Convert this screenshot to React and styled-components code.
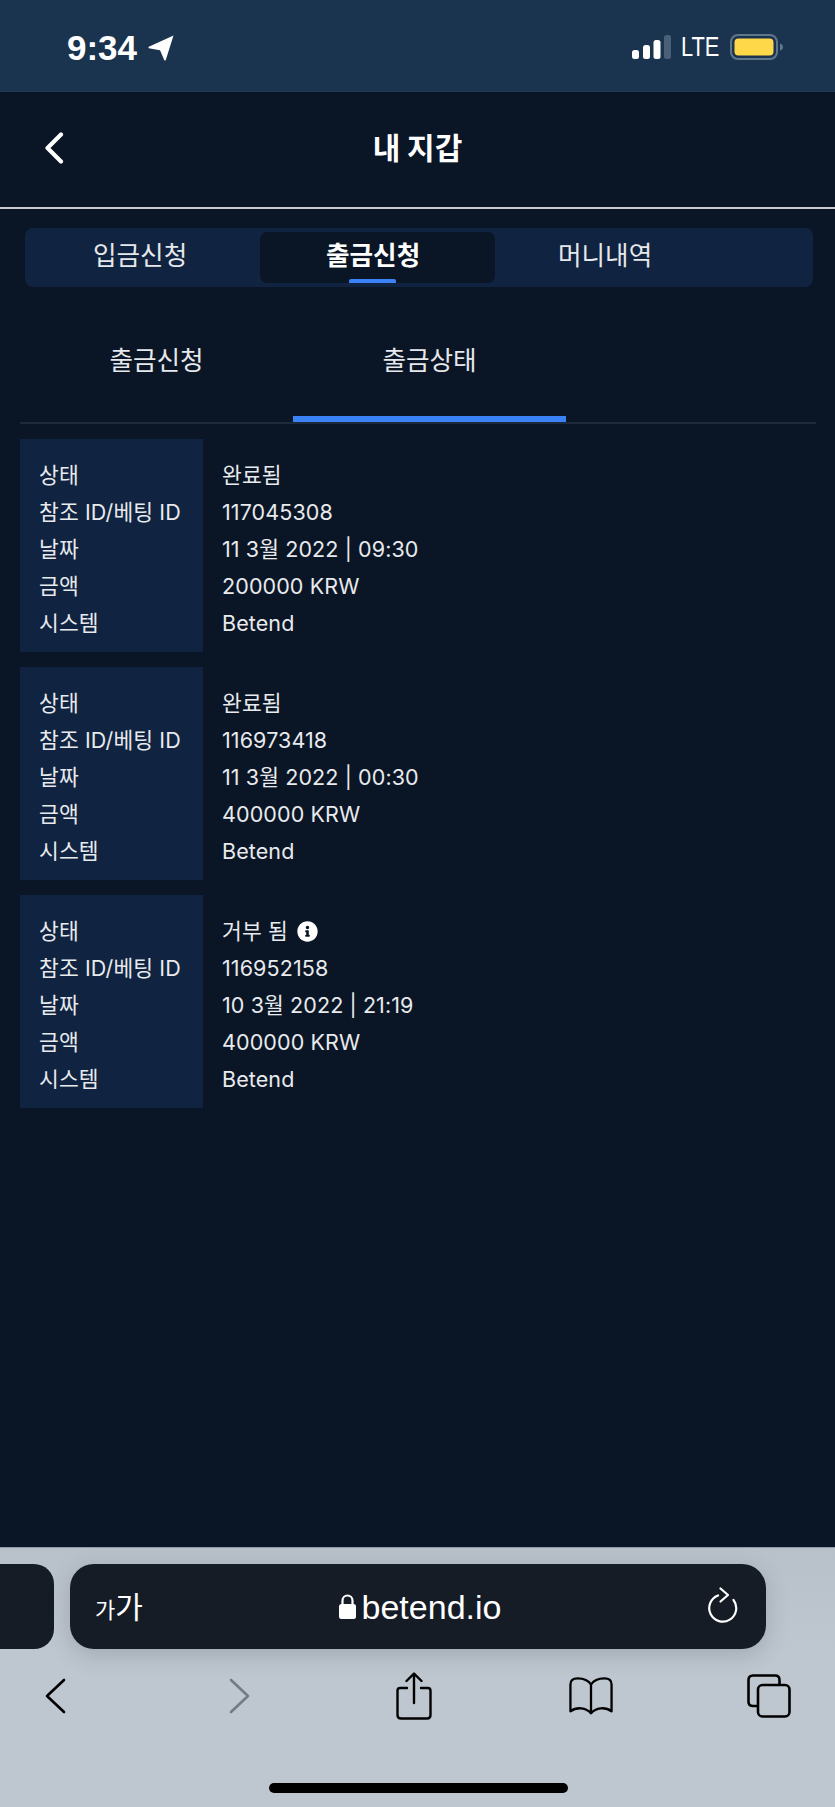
import React from "react";
import styled, { createGlobalStyle } from "styled-components";
import { FaInfoCircle } from "react-icons/fa";

const GlobalStyle = createGlobalStyle`
  html, body {
    margin: 0;
    padding: 0;
    background: #0a1626;
  }
  * {
    box-sizing: border-box;
  }
`;

const KR = `"Noto Sans CJK KR", "Noto Sans", sans-serif`;

const Screen = styled.div`
  width: 835px;
  height: 1807px;
  display: flex;
  flex-direction: column;
  overflow: hidden;
  background: #0a1626;
  color: #f1f3f5;
  font-family: ${KR};
`;

const StatusBar = styled.div`
  height: 92px;
  flex: none;
  display: flex;
  align-items: flex-start;
  justify-content: space-between;
  padding: 34px 51px 0 67px;
  background: #1a334f;
  border-bottom: 1px solid #24384e;
`;

const TimeGroup = styled.div`
  display: flex;
  align-items: center;
  gap: 11px;
`;

const Time = styled.span`
  font-family: "Liberation Sans", sans-serif;
  font-size: 35px;
  font-weight: 700;
  line-height: 27px;
  color: #fff;
`;

const StatusIcons = styled.div`
  display: flex;
  align-items: center;
  height: 26px;
`;

const Lte = styled.span`
  width: 38px;
  margin: 0 11px 0 10px;
  font-family: "Liberation Sans", sans-serif;
  font-size: 28px;
  line-height: 26px;
  color: #fff;
  white-space: nowrap;
  transform: scaleX(0.78);
  transform-origin: left center;
`;

const NavBar = styled.header`
  height: 117px;
  flex: none;
  display: grid;
  grid-template-columns: 1fr auto 1fr;
  align-items: center;
  padding: 0 44px 4px;
  border-bottom: 2px solid #c9cbce;
`;

const NavTitle = styled.h1`
  margin: 0 0 3px;
  font-size: 30px;
  font-weight: 700;
  line-height: 40px;
  color: #fff;
`;

const MainTabs = styled.nav`
  margin: 19px 22px 0 25px;
  height: 59px;
  flex: none;
  display: grid;
  grid-template-columns: 235px 235px 220px;
  padding: 4px 0;
  background: #102340;
  border-radius: 8px;
`;

const MainTab = styled.div`
  position: relative;
  padding: 3px 0 0 ${(p) => p.$inset}px;
  font-size: 25.6px;
  line-height: 38px;
  font-weight: ${(p) => (p.$active ? 700 : 400)};
  color: ${(p) => (p.$active ? "#fff" : "#e6e8eb")};
  background: ${(p) => (p.$active ? "#0a1626" : "transparent")};
  border-radius: 7px;
`;

const TabMarker = styled.span`
  position: absolute;
  left: 89px;
  bottom: 0;
  width: 47px;
  height: 4px;
  border-radius: 2px 2px 0 0;
  background: #3b82f6;
`;

const SubTabs = styled.div`
  margin: 36px 19px 0 20px;
  flex: none;
  display: flex;
  border-bottom: 2px solid #1d2a3c;
`;

const SubTab = styled.div`
  width: 273px;
  height: 99px;
  padding-top: 17px;
  text-align: center;
  font-size: 25.6px;
  line-height: 38px;
  color: #e6e8eb;
  border-bottom: 6px solid ${(p) => (p.$active ? "#3b82f6" : "transparent")};
`;

const CardList = styled.div`
  margin: 15px 20px 0;
  display: flex;
  flex-direction: column;
  gap: 15px;
`;

const Card = styled.section`
  display: flex;
  height: 213px;
`;

const LabelColumn = styled.div`
  width: 183px;
  padding: 18px 0 0 19px;
  background: #102340;
`;

const ValueColumn = styled.div`
  padding: 18px 0 0 19px;
`;

const Line = styled.div`
  display: flex;
  align-items: center;
  gap: 9px;
  height: 37px;
  font-family: Inter, "Noto Sans CJK KR", sans-serif;
  font-size: 21.5px;
  letter-spacing: 0.1px;
  line-height: 37px;
  color: #e8eaed;
  white-space: nowrap;
`;

const InfoIcon = styled(FaInfoCircle)`
  width: 21px;
  height: 21px;
  color: #fff;
`;

const Toolbar = styled.footer`
  margin-top: auto;
  height: 260px;
  flex: none;
  padding-top: 16px;
  background: linear-gradient(#b8c0c9, #bec6cf 40%);
  border-top: 1px solid #8f99a5;
`;

const AddressRow = styled.div`
  display: flex;
  gap: 16px;
`;

const PeekTab = styled.div`
  width: 54px;
  height: 85px;
  background: #151c26;
  border-radius: 0 20px 20px 0;
`;

const AddressBar = styled.div`
  width: 696px;
  height: 85px;
  display: grid;
  grid-template-columns: 1fr auto 1fr;
  align-items: center;
  padding: 0 27px 0 25px;
  background: #151c26;
  border-radius: 24px;
  box-shadow: 0 6px 22px rgba(60, 70, 85, 0.22);
  color: #fff;
`;

const TextSize = styled.div`
  display: flex;
  align-items: baseline;
  font-size: 30px;
  line-height: 40px;
`;

const SmallGa = styled.span`
  font-size: 22px;
`;

const Domain = styled.div`
  display: flex;
  align-items: center;
  gap: 6px;
  margin-left: 6px;
  font-family: "Liberation Sans", sans-serif;
  font-size: 34px;
  line-height: 40px;
`;

const ReloadSlot = styled.div`
  display: flex;
  justify-content: flex-end;
  margin-bottom: 4px;
`;

const IconRow = styled.div`
  display: grid;
  grid-template-columns: 183.5px 174.5px 177.5px 177.5px 44px;
  align-items: center;
  height: 50px;
  margin-top: 22px;
  padding-left: 33.5px;
`;

const IconSlot = styled.div`
  width: 44px;
  display: flex;
  justify-content: center;
  color: ${(p) => (p.$disabled ? "#737b85" : "#000")};
`;

const HomeBar = styled.div`
  width: 299px;
  height: 10px;
  margin: 62px 0 0 269px;
  border-radius: 5px;
  background: #000;
`;

const records = [
  { status: "완료됨", id: "117045308", date: "11 3월 2022 | 09:30", amount: "200000 KRW" },
  { status: "완료됨", id: "116973418", date: "11 3월 2022 | 00:30", amount: "400000 KRW" },
  { status: "거부 됨", id: "116952158", date: "10 3월 2022 | 21:19", amount: "400000 KRW", info: true },
];

const labels = ["상태", "참조 ID/베팅 ID", "날짜", "금액", "시스템"];

const LocationArrow = () => (
  <svg width="26" height="26" viewBox="0 0 26 26">
    <path d="M25.5 0.5 L17.8 25 Q17 26 16.2 25 L12 15.2 L0.8 13.3 Q0 12.5 0.8 11.8 Z" fill="#fff" />
  </svg>
);

const Signal = () => (
  <svg width="39" height="24" viewBox="0 0 39 24">
    <rect x="0" y="15" width="7" height="9" rx="2.5" fill="#fff" />
    <rect x="11" y="10" width="7" height="14" rx="2.5" fill="#fff" />
    <rect x="21.5" y="5" width="7" height="19" rx="2.5" fill="#fff" />
    <rect x="32" y="0" width="7" height="24" rx="2.5" fill="#4a6078" />
  </svg>
);

const Battery = () => (
  <svg width="54" height="26" viewBox="0 0 54 26">
    <rect x="1" y="1" width="46" height="24" rx="7" fill="none" stroke="#61758b" strokeWidth="2" />
    <rect x="4.5" y="4.5" width="39" height="17" rx="4" fill="#ffd84a" />
    <path d="M50 9.5 Q53 10.5 53 13 Q53 15.5 50 16.5 Z" fill="#61758b" />
  </svg>
);

const BackChevron = () => (
  <svg width="20" height="32" viewBox="0 0 20 32">
    <path d="M17 2.5 L3.5 16 L17 29.5" fill="none" stroke="#fff" strokeWidth="4.2" strokeLinecap="round" strokeLinejoin="round" />
  </svg>
);

const Lock = () => (
  <svg width="17" height="25" viewBox="0 0 17 25">
    <path d="M3.5 11 V6.5 a5 5 0 0 1 10 0 V11" fill="none" stroke="#fff" strokeWidth="2.2" />
    <rect x="0" y="10" width="17" height="15" rx="2.5" fill="#fff" />
  </svg>
);

const Reload = () => (
  <svg width="31" height="36" viewBox="0 0 31 36">
    <path d="M10 8.5 A13.5 13.5 0 1 0 25.5 13" fill="none" stroke="#fff" strokeWidth="2.2" strokeLinecap="round" />
    <path d="M12.5 1.5 L20 8 L12.5 14.5" fill="none" stroke="#fff" strokeWidth="2.2" strokeLinecap="round" strokeLinejoin="round" />
  </svg>
);

const ToolChevron = ({ flip }) => (
  <svg width="21" height="36" viewBox="0 0 21 36">
    <path
      d={flip ? "M2 2 L19 18 L2 34" : "M19 2 L2 18 L19 34"}
      fill="none"
      stroke="currentColor"
      strokeWidth="2.6"
      strokeLinecap="round"
      strokeLinejoin="round"
    />
  </svg>
);

const Share = () => (
  <svg width="36" height="48" viewBox="0 0 36 48" fill="none" stroke="currentColor" strokeWidth="2.4" strokeLinecap="round" strokeLinejoin="round">
    <path d="M18 31 V2 M10.5 9 L18 1.5 L25.5 9" />
    <path d="M11 16 H4 Q1.5 16 1.5 19 V43 Q1.5 46.5 5 46.5 H31 Q34.5 46.5 34.5 43 V19 Q34.5 16 32 16 H25" />
  </svg>
);

const Book = () => (
  <svg width="46" height="40" viewBox="0 0 46 40" fill="none" stroke="currentColor" strokeWidth="2.4" strokeLinecap="round" strokeLinejoin="round">
    <path d="M23 8 C20 3 15 1.5 9 1.5 Q1.5 1.5 1.5 8 V36 C8 31 18 32 23 38 C28 32 38 31 44.5 36 V8 Q44.5 1.5 37 1.5 C31 1.5 26 3 23 8 Z" />
    <path d="M23 8 V38" />
  </svg>
);

const Tabs = () => (
  <svg width="44" height="44" viewBox="0 0 44 44" fill="none" stroke="currentColor" strokeWidth="2.6" strokeLinejoin="round">
    <path d="M10 32 H6 Q1.5 32 1.5 28 V6 Q1.5 1.5 6 1.5 H28 Q32.5 1.5 32.5 6 V10" />
    <rect x="11" y="11" width="31.5" height="31.5" rx="4.5" />
  </svg>
);

export default function App() {
  return (
    <Screen>
      <GlobalStyle />
      <StatusBar>
        <TimeGroup>
          <Time>9:34</Time>
          <LocationArrow />
        </TimeGroup>
        <StatusIcons>
          <Signal />
          <Lte>LTE</Lte>
          <Battery />
        </StatusIcons>
      </StatusBar>

      <NavBar>
        <BackChevron />
        <NavTitle>내 지갑</NavTitle>
      </NavBar>

      <MainTabs>
        <MainTab $inset={68}>입금신청</MainTab>
        <MainTab $active $inset={66}>
          출금신청
          <TabMarker />
        </MainTab>
        <MainTab $inset={63}>머니내역</MainTab>
      </MainTabs>

      <SubTabs>
        <SubTab>출금신청</SubTab>
        <SubTab $active>출금상태</SubTab>
      </SubTabs>

      <CardList>
        {records.map((r) => (
          <Card key={r.id}>
            <LabelColumn>
              {labels.map((l) => (
                <Line key={l}>{l}</Line>
              ))}
            </LabelColumn>
            <ValueColumn>
              <Line>
                {r.status}
                {r.info && <InfoIcon />}
              </Line>
              <Line>{r.id}</Line>
              <Line>{r.date}</Line>
              <Line>{r.amount}</Line>
              <Line>Betend</Line>
            </ValueColumn>
          </Card>
        ))}
      </CardList>

      <Toolbar>
        <AddressRow>
          <PeekTab />
          <AddressBar>
            <TextSize>
              <SmallGa>가</SmallGa>가
            </TextSize>
            <Domain>
              <Lock />
              betend.io
            </Domain>
            <ReloadSlot>
              <Reload />
            </ReloadSlot>
          </AddressBar>
        </AddressRow>
        <IconRow>
          <IconSlot>
            <ToolChevron />
          </IconSlot>
          <IconSlot $disabled>
            <ToolChevron flip />
          </IconSlot>
          <IconSlot>
            <Share />
          </IconSlot>
          <IconSlot>
            <Book />
          </IconSlot>
          <IconSlot>
            <Tabs />
          </IconSlot>
        </IconRow>
        <HomeBar />
      </Toolbar>
    </Screen>
  );
}
